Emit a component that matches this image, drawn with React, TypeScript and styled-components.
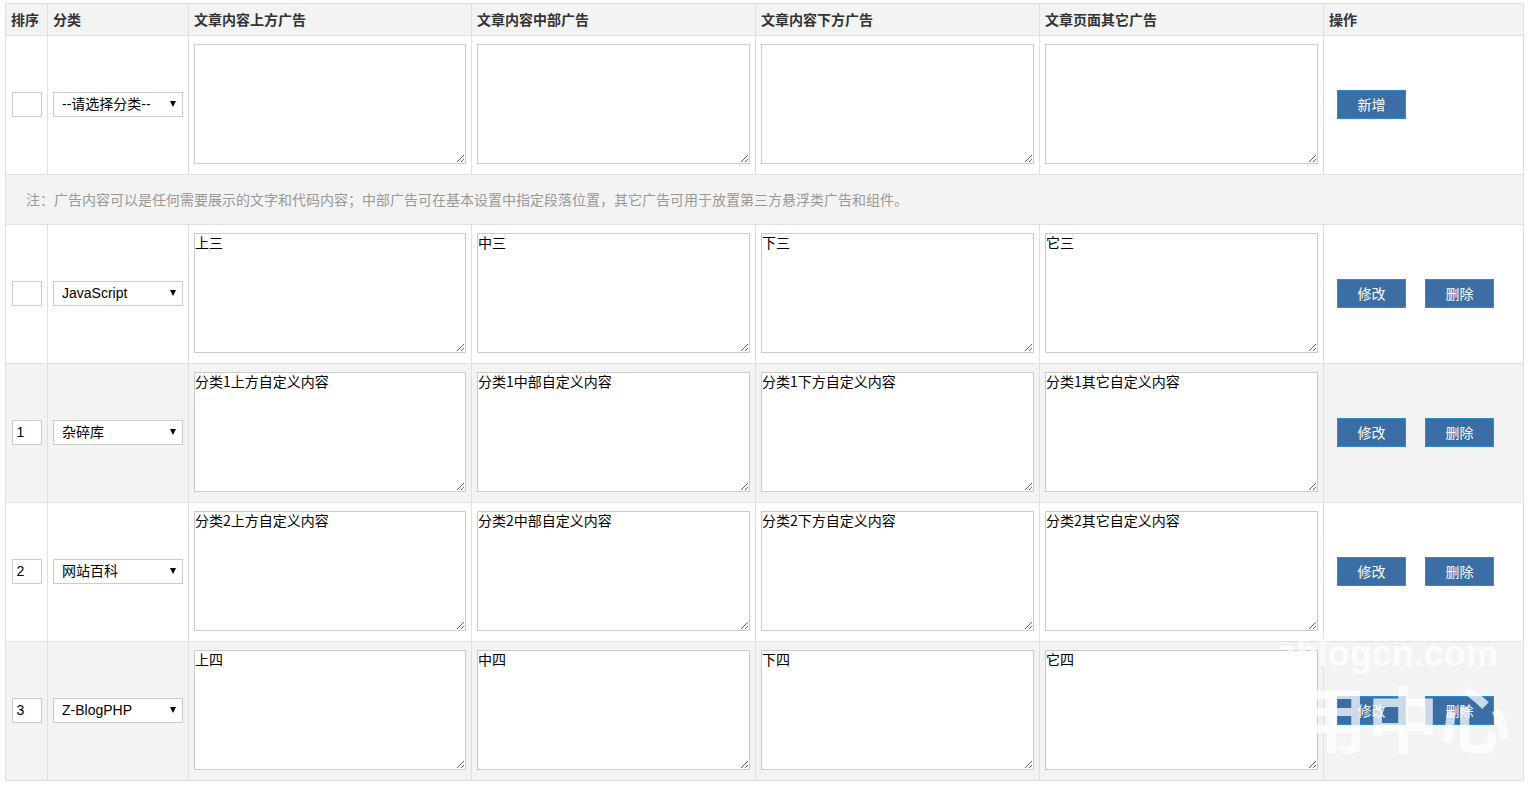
import React from 'react';
import styled, { createGlobalStyle } from 'styled-components';

const GlobalStyle = createGlobalStyle`
  html, body {
    margin: 0;
    padding: 0;
    background: #ffffff;
  }
  body {
    font-family: 'Liberation Sans', 'Noto Sans CJK SC', sans-serif;
    font-size: 14px;
    color: #333;
  }
`;

const Page = styled.div`
  position: relative;
  padding: 3px 5px;
  overflow: hidden;
`;

const Table = styled.table`
  width: 1518px;
  table-layout: fixed;
  border-collapse: collapse;
  border: 1px solid #e0e0e0;
`;

const HeadRow = styled.tr`
  background: #f3f3f3;
`;

const HeadCell = styled.th`
  height: 31px;
  padding: 0 5px;
  border: 1px solid #e0e0e0;
  text-align: left;
  font-family: 'Noto Sans CJK SC', 'Liberation Sans', sans-serif;
  font-size: 14px;
  font-weight: 700;
  line-height: 31px;
  color: #333;
  white-space: nowrap;
`;

const Row = styled.tr<{ $shade?: boolean }>`
  background: ${(p) => (p.$shade ? '#f3f3f3' : '#ffffff')};
`;

const Cell = styled.td<{ $center?: boolean }>`
  padding: 8px 5px 10px;
  border: 1px solid #e0e0e0;
  vertical-align: middle;
  text-align: ${(p) => (p.$center ? 'center' : 'left')};
`;

const NoteCell = styled.td`
  height: 49px;
  padding: 0 20px;
  border: 1px solid #e0e0e0;
  font-family: 'Noto Sans CJK SC', 'Liberation Sans', sans-serif;
  font-size: 14px;
  color: #999;
  line-height: 49px;
  white-space: nowrap;
`;

const SortInput = styled.input`
  display: block;
  box-sizing: border-box;
  width: 30px;
  height: 25px;
  margin: 0 auto;
  padding: 0 4px;
  border: 1px solid #ccc;
  background: #fff;
  font-family: 'Liberation Sans', sans-serif;
  font-size: 14px;
  color: #000;
  outline: none;
`;

const SelectWrap = styled.div`
  position: relative;
  width: 130px;
  height: 25px;

  &::after {
    content: '';
    position: absolute;
    right: 7px;
    top: 9px;
    width: 0;
    height: 0;
    border-left: 3.5px solid transparent;
    border-right: 3.5px solid transparent;
    border-top: 6px solid #000;
    pointer-events: none;
  }
`;

const CategorySelect = styled.select`
  appearance: none;
  -webkit-appearance: none;
  box-sizing: border-box;
  width: 100%;
  height: 100%;
  margin: 0;
  padding: 0 18px 0 8px;
  border: 1px solid #ccc;
  border-radius: 0;
  background: #fff;
  font-family: 'Liberation Sans', 'Noto Sans CJK SC', sans-serif;
  font-size: 14px;
  color: #000;
  outline: none;
`;

const AdText = styled.textarea`
  display: block;
  box-sizing: border-box;
  width: 100%;
  height: 120px;
  margin: 0;
  padding: 0;
  border: 1px solid #ccc;
  background: #fff;
  font-family: 'Noto Sans CJK SC', 'Liberation Serif', sans-serif;
  font-size: 14px;
  line-height: 17px;
  color: #000;
  outline: none;
`;

const Actions = styled.div`
  display: flex;
  align-items: center;
  gap: 19px;
  padding: 0 8px;
`;

const Button = styled.button`
  box-sizing: border-box;
  width: 69px;
  height: 29px;
  padding: 0;
  border: 1px solid #2a8fcf;
  background: #3b6ea5;
  color: #fff;
  font-family: 'Noto Sans CJK SC', 'Liberation Sans', sans-serif;
  font-size: 14px;
  cursor: pointer;
`;

/* faint site stamp laid over the bottom-right corner */
const Watermark = styled.div`
  position: absolute;
  right: 18px;
  bottom: 27px;
  display: flex;
  flex-direction: column;
  align-items: flex-end;
  color: rgba(255, 255, 255, 0.74);
  pointer-events: none;
  filter: blur(0.5px);
`;

const MarkSite = styled.span`
  font-family: 'Liberation Sans', sans-serif;
  font-size: 36px;
  font-weight: 700;
  line-height: 42px;
  margin-right: 13px;
`;

const MarkName = styled.span`
  font-family: 'Noto Sans CJK SC', sans-serif;
  font-size: 72px;
  font-weight: 700;
  line-height: 82px;
`;

const categories = ['JavaScript', '杂碎库', '网站百科', 'Z-BlogPHP'];

interface AdRow {
  sort: string;
  category: string;
  top: string;
  middle: string;
  bottom: string;
  other: string;
}

const rows: AdRow[] = [
  { sort: '', category: 'JavaScript', top: '上三', middle: '中三', bottom: '下三', other: '它三' },
  {
    sort: '1',
    category: '杂碎库',
    top: '分类1上方自定义内容',
    middle: '分类1中部自定义内容',
    bottom: '分类1下方自定义内容',
    other: '分类1其它自定义内容',
  },
  {
    sort: '2',
    category: '网站百科',
    top: '分类2上方自定义内容',
    middle: '分类2中部自定义内容',
    bottom: '分类2下方自定义内容',
    other: '分类2其它自定义内容',
  },
  { sort: '3', category: 'Z-BlogPHP', top: '上四', middle: '中四', bottom: '下四', other: '它四' },
];

const CategoryPicker = ({ value }: { value: string }) => (
  <SelectWrap>
    <CategorySelect defaultValue={value}>
      <option value="">--请选择分类--</option>
      {categories.map((c) => (
        <option key={c} value={c}>
          {c}
        </option>
      ))}
    </CategorySelect>
  </SelectWrap>
);

const AdCells = ({ row }: { row?: AdRow }) => (
  <>
    <Cell>
      <AdText defaultValue={row?.top ?? ''} />
    </Cell>
    <Cell>
      <AdText defaultValue={row?.middle ?? ''} />
    </Cell>
    <Cell>
      <AdText defaultValue={row?.bottom ?? ''} />
    </Cell>
    <Cell>
      <AdText defaultValue={row?.other ?? ''} />
    </Cell>
  </>
);

const App = () => {
  return (
    <Page>
      <GlobalStyle />
      <Table>
        <colgroup>
          <col style={{ width: 42 }} />
          <col style={{ width: 141 }} />
          <col style={{ width: 283 }} />
          <col style={{ width: 284 }} />
          <col style={{ width: 284 }} />
          <col style={{ width: 284 }} />
          <col style={{ width: 200 }} />
        </colgroup>
        <thead>
          <HeadRow>
            <HeadCell>排序</HeadCell>
            <HeadCell>分类</HeadCell>
            <HeadCell>文章内容上方广告</HeadCell>
            <HeadCell>文章内容中部广告</HeadCell>
            <HeadCell>文章内容下方广告</HeadCell>
            <HeadCell>文章页面其它广告</HeadCell>
            <HeadCell>操作</HeadCell>
          </HeadRow>
        </thead>
        <tbody>
          <Row>
            <Cell $center>
              <SortInput defaultValue="" />
            </Cell>
            <Cell>
              <CategoryPicker value="" />
            </Cell>
            <AdCells />
            <Cell>
              <Actions>
                <Button>新增</Button>
              </Actions>
            </Cell>
          </Row>
          <Row $shade>
            <NoteCell colSpan={7}>
              注：广告内容可以是任何需要展示的文字和代码内容；中部广告可在基本设置中指定段落位置，其它广告可用于放置第三方悬浮类广告和组件。
            </NoteCell>
          </Row>
          {rows.map((row, i) => (
            <Row key={row.category} $shade={i % 2 === 1}>
              <Cell $center>
                <SortInput defaultValue={row.sort} />
              </Cell>
              <Cell>
                <CategoryPicker value={row.category} />
              </Cell>
              <AdCells row={row} />
              <Cell>
                <Actions>
                  <Button>修改</Button>
                  <Button>删除</Button>
                </Actions>
              </Cell>
            </Row>
          ))}
        </tbody>
      </Table>
      <Watermark>
        <MarkSite>zblogcn.com</MarkSite>
        <MarkName>应用中心</MarkName>
      </Watermark>
    </Page>
  );
};

export default App;
